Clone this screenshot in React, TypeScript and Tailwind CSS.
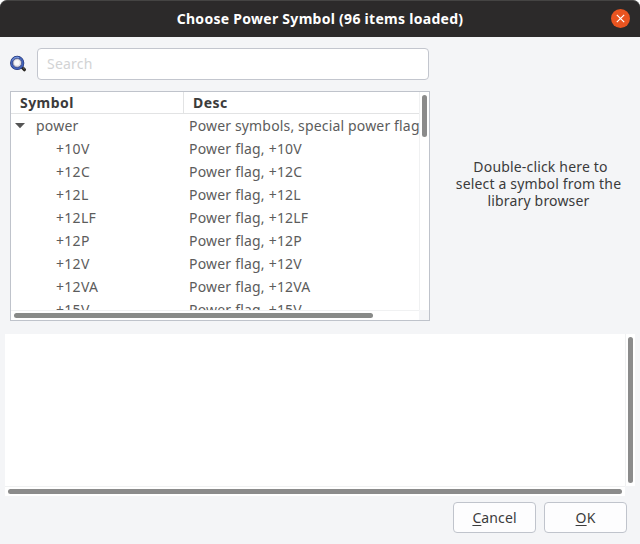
const items = ['+10V', '+12C', '+12L', '+12LF', '+12P', '+12V', '+12VA', '+15V'];

function SearchIcon() {
  return (
    <svg width="18" height="18" viewBox="0 0 18 18" className="shrink-0">
      <path d="M11.8 12 14.4 14.7" stroke="#25231f" strokeWidth="3.2" strokeLinecap="round" />
      <path d="M12.8 12.4 14.6 14.1" stroke="#8a857a" strokeWidth="0.9" />
      <circle cx="7.2" cy="7.9" r="5.9" fill="#e9e9f0" stroke="#1d2a66" strokeWidth="2.4" />
      <circle cx="7.2" cy="7.9" r="5.7" fill="none" stroke="#4263bb" strokeWidth="1.8" />
      <circle cx="7.2" cy="7.9" r="4.4" fill="#dedce0" stroke="#27377c" strokeWidth="0.7" />
      <path d="M2.4 5.4A5.5 5.5 0 0 1 9 2.6" fill="none" stroke="#7e9ee0" strokeWidth="1" />
      <circle cx="7" cy="7.7" r="2.7" fill="#f8f8f8" />
    </svg>
  );
}

function TitleBar() {
  return (
    <header className="relative flex h-[37px] items-center justify-center rounded-t-[7px] border-t border-[#454443] bg-[#2c2a2a]">
      <h1 className="text-[14px] font-bold leading-5 tracking-[0.28px] text-white">Choose Power Symbol (96 items loaded)</h1>
      <button aria-label="Close" className="absolute right-[10px] top-[8px] flex size-[19px] items-center justify-center rounded-full bg-[#e95420]">
        <svg width="9" height="9" viewBox="0 0 9 9" stroke="#fff" strokeWidth="1.2">
          <path d="M.8.8 8.2 8.2M8.2.8.8 8.2" />
        </svg>
      </button>
    </header>
  );
}

function SymbolTree() {
  return (
    <div className="grid h-[230px] w-[420px] grid-cols-[408px_10px] grid-rows-[218px_10px] border border-[#bfc3cb] bg-white">
      <div className="overflow-hidden">
        <div className="flex h-[22px] border-b border-[#e2e3e4] text-[14px] font-bold leading-[22px] tracking-[0.45px] text-[#3b3b3b]">
          <div className="w-[173px] border-r border-[#e2e3e4] pl-[9px]">Symbol</div>
          <div className="pl-[9px]">Desc</div>
        </div>
        <div className="flex h-[23px] items-center whitespace-nowrap">
          <div className="flex w-[178px] shrink-0 items-center pl-[4px]">
            <svg width="10" height="6" viewBox="0 0 10 6" fill="#555">
              <path d="M0 0h10L5 5.3z" />
            </svg>
            <span className="pl-[11px] tracking-[0.2px]">power</span>
          </div>
          <div className="tracking-[0.16px]">Power symbols, special power flags</div>
        </div>
        {items.map((name) => (
          <div key={name} className="flex h-[23px] items-center whitespace-nowrap">
            <div className="w-[178px] shrink-0 pl-[45px] tracking-[0.3px]">{name}</div>
            <div className="tracking-[0.2px]">Power flag, {name}</div>
          </div>
        ))}
      </div>
      <div className="border-l border-[#f0f1f2] pl-[2px] pt-[3px]">
        <div className="h-[42px] w-[5px] rounded-full bg-[#8b8b8b]" />
      </div>
      <div className="border-t border-[#f0f1f2] pl-[3px] pt-[2px]">
        <div className="h-[5px] w-[359px] rounded-full bg-[#888a88]" />
      </div>
      <div className="bg-[#f4f5f7]" />
    </div>
  );
}

function DetailsPane() {
  return (
    <div className="ml-[5px] mt-[13px] grid h-[162px] w-[630px] grid-cols-[620px_10px] grid-rows-[152px_10px]">
      <div className="bg-white" />
      <div className="border-l border-[#f0f1f2] bg-white pl-[2px] pt-[3px]">
        <div className="h-[146px] w-[5px] rounded-full bg-[#8b8b8b]" />
      </div>
      <div className="border-t border-[#f0f1f2] bg-white pl-[3px] pt-[2px]">
        <div className="h-[5px] w-[614px] rounded-full bg-[#8b8b8b]" />
      </div>
    </div>
  );
}

const buttonClass =
  'flex h-[31px] w-[83px] items-center justify-center rounded-[4px] border border-[#c0c4cc] bg-[#fdfdfe] tracking-[0.1px] text-[#3b3b3b]';

export default function App() {
  return (
    <div className="h-[544px] w-[640px] overflow-hidden bg-white font-['Noto_Sans',sans-serif] text-[14px] leading-[17px] text-[#5c5c5c]">
      <TitleBar />
      <main className="h-[507px] bg-[#f4f5f7]">
        <div className="flex">
          <div className="pl-[10px] pt-[11px]">
            <div className="flex h-[32px] items-center">
              <SearchIcon />
              <input
                placeholder="Search"
                className="ml-[9px] h-[32px] w-[392px] rounded-[4px] border border-[#c3c6ce] bg-white px-[9px] pb-[2px] text-[14px] tracking-[0.2px] placeholder:text-[#d2d3d4]"
              />
            </div>
            <div className="pt-[11px]">
              <SymbolTree />
            </div>
          </div>
          <div className="flex w-[210px] items-center justify-center pl-[7px] pt-[9px] text-center tracking-[0.17px] text-[#3b3b3b]">
            <p className="whitespace-nowrap">
              <span className="pl-[4px]">Double-click here to</span>
              <br />
              select a symbol from the
              <br />
              library browser
            </p>
          </div>
        </div>
        <DetailsPane />
        <div className="flex justify-end gap-[8px] pr-[13px] pt-[6px]">
          <button className={buttonClass}>
            <span className="underline underline-offset-2">C</span>ancel
          </button>
          <button className={buttonClass}>
            <span className="underline underline-offset-2">O</span>K
          </button>
        </div>
      </main>
    </div>
  );
}
